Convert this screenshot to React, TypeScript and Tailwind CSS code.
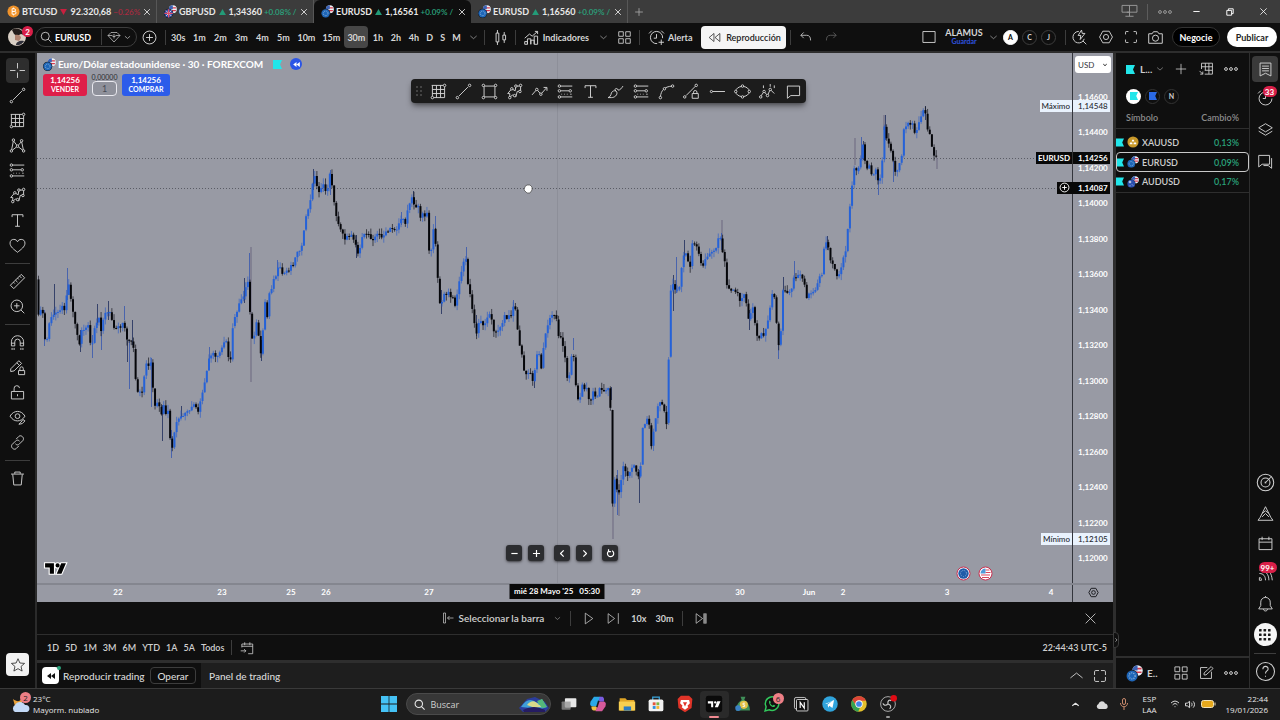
import type { ReactNode } from "react";
import clsx from "clsx";

const UI_FONT = "font-['Lato','Open_Sans',sans-serif]";
const OS_FONT = "font-['Open_Sans','Noto_Sans',sans-serif]";

/* ---------- icons (28px grid) ---------- */

const dot = (x: number, y: number, r = 1.8) => (
  <circle key={`${x}-${y}`} cx={x} cy={y} r={r} className="fill-[#0f0f0f]" />
);

const ICONS: Record<string, ReactNode> = {
  cross: <path d="M14 3v8M14 17v8M3 14h8M17 14h8" />,
  line: (
    <>
      <path d="M7.500 20.500 20.500 7.500" />
      {dot(5, 23)}
      {dot(23, 5)}
    </>
  ),
  grid: (
    <>
      <path d="M4 5h17M5 5v16M5 23h18M23 7v16M5 11h18M5 17h18M11 5v18M17 5v18" />
      {dot(23, 5)}
      {dot(5, 23)}
    </>
  ),
  pattern: (
    <>
      <path d="M5 22 8 7l6 8 6-7 3 14-9-7z" />
      {dot(5, 22)}
      {dot(8, 6)}
      {dot(14, 15)}
      {dot(20, 7)}
      {dot(23, 22)}
    </>
  ),
  forecast: (
    <>
      <path d="M6 6h18M7 13h12M6 22h18" />
      <path d="M8 18h1M12 18h1M16 18h1M21 18h2" />
      {dot(5, 6)}
      {dot(5, 13)}
      {dot(21, 13)}
      {dot(5, 22)}
    </>
  ),
  shapes: (
    <>
      <path d="M7 23V17H4l6-7 5 3 1-7h7v7l-5 1-2 8-5-3z" />
      {dot(7, 23)}
      {dot(10, 10)}
      {dot(16, 6)}
      {dot(23, 5)}
      {dot(22, 14)}
      {dot(14, 20)}
    </>
  ),
  text: <path d="M6 9V5.500h16V9M14 5.500v17M10.500 22.500h7" />,
  heart: (
    <path d="M14 24C9 20 3 16 3 10.500 3 7 5.500 5 8.500 5c2.500 0 4.500 1.200 5.500 3.500C15 6.200 17 5 19.500 5c3 0 5.500 2 5.500 5.500C25 16 19 20 14 24z" />
  ),
  ruler: <path d="M3.500 19.500 19.500 3.500l5 5-16 16zM8 15l2 2M11 12l3 3M14 9l2 2M17 6l3 3" />,
  zoomIn: <path d="M13 4.500a8.500 8.500 0 1 0 0 17 8.500 8.500 0 0 0 0-17zM19 19l5 5M13 9v8M9 13h8" />,
  magnet: (
    <path d="M5 19v-6a9 9 0 0 1 18 0v6h-5v-6a4 4 0 0 0-8 0v6zM5 15h5M18 15h5M6 22v3M9 22v3M19 22v3M22 22v3" />
  ),
  pencilLock: (
    <>
      <path d="M4 20v-4L16 4l4 4L9 19l-5 1M13 7l4 4" />
      <path d="M15.500 18.500h9v6h-9zM17.500 18v-2.500a2.500 2.500 0 0 1 5 0V18" />
    </>
  ),
  lock: <path d="M5 12.500h18v11H5zM9 12V8.500a4 4 0 0 1 8-1M14 16.500v3" />,
  eye: (
    <>
      <path d="M3 12c3-5 7-7 11-7s8 2 11 7c-3 5-7 7-11 7s-8-2-11-7z" />
      <circle cx="14" cy="12" r="3.500" />
      <path d="M16 24l5-1 4-4-3-2-3 4z" />
    </>
  ),
  link: (
    <path d="m12 9 4-4c3-3 9 2 6 6l-5 5c-2 2-4 2-6 0M16 19l-4 4c-3 3-9-2-6-6l5-5c2-2 4-2 6 0" />
  ),
  trash: <path d="M4.500 7.500h19M10 7V4.500h8V7M7 8l1.500 15.500h11L21 8" />,
  star: <path d="m14 3 3.300 7.500 8.200.700-6.200 5.400 1.900 8L14 20.400l-7.200 4.200 1.900-8-6.200-5.400 8.200-.700z" />,
  search: <path d="M12.500 4.500a8 8 0 1 0 0 16 8 8 0 0 0 0-16zM18.500 18.500 25 25" />,
  gem: <path d="M8 5h12l6 6-12 13L2 11zM2 11h9M17 11h9M14 8v9M11 13h6" />,
  plusCircle: (
    <>
      <circle cx="14" cy="14" r="9.500" />
      <path d="M14 9v10M9 14h10" />
    </>
  ),
  plus: <path d="M14 5v18M5 14h18" />,
  minus: <path d="M6 14h16" />,
  close: <path d="m6 6 16 16M22 6 6 22" />,
  down: <path d="m6 10 8 7 8-7" />,
  up: <path d="m4 18 10-8 10 8" />,
  left: <path d="m17 6-8 8 8 8" />,
  right: <path d="m11 6 8 8-8 8" />,
  candles: <path d="M7.500 7.500h4v13h-4zM9.500 3v4.500M9.500 20.500V25M17.500 10.500h4v7h-4zM19.500 6v4.500M19.500 17.500V22" />,
  indicators: (
    <path d="M4 24v-4h4v4zM8 24v-8h5v8M13 24v-6h5v6M18 24V12h5v12zM4 15l7-6 4 3 8-7M19 5h4v4" />
  ),
  layouts: (
    <path d="M4.500 4.500h7.500v7.500H4.500zM16 4.500h7.500v7.500H16zM4.500 16h7.500v7.500H4.500zM16 16h7.500v7.500H16z" />
  ),
  alarm: (
    <path d="M15 23a9 9 0 1 1 8-8M14 9v6h-4M3 8l4-4M21 4l4 4M21 17v8M17 21h8" />
  ),
  clock: <path d="M14 6a9.500 9.500 0 1 0 9.500 9.500M14 9v6.500h-4M3 8l4-4" />,
  rewind: <path d="M13 6.500v15L4 14zM24 6.500v15L15 14z" />,
  undo: <path d="m10 6-5 5 5 5M5 11h10c5 0 7 3 7 9" />,
  redo: <path d="m18 6 5 5-5 5M23 11H13c-5 0-7 3-7 9" />,
  square: <path d="M4.500 5.500h19v17h-19z" />,
  hexagon: (
    <>
      <path d="M9 5h10l5 9-5 9H9l-5-9z" />
      <circle cx="14" cy="14" r="4" />
    </>
  ),
  expand: <path d="M10 5.500H6.500a1 1 0 0 0-1 1V10M18 5.500h3.500a1 1 0 0 1 1 1V10M10 22.500H6.500a1 1 0 0 1-1-1V18M18 22.500h3.500a1 1 0 0 0 1-1V18" />,
  frame: <path d="M12.500 5.500h-5a2 2 0 0 0-2 2v5M15.500 5.500h5a2 2 0 0 1 2 2v5M12.500 22.500h-5a2 2 0 0 1-2-2v-5M15.500 22.500h5a2 2 0 0 0 2-2v-5" />,
  camera: (
    <>
      <path d="M4 8.500h5l2-3h6l2 3h5v14H4z" />
      <circle cx="14" cy="15" r="4.500" />
    </>
  ),
  quick: <path d="M13 5a8.500 8.500 0 1 0 8 11M19 19l5 5M17 3l-5 8h4l-1 6 7-9h-4z" />,
  zigzag: (
    <>
      <path d="m3 19 7-8 6 7 8-9M20 8h5v5" />
      {dot(10, 11)}
      {dot(16, 18)}
    </>
  ),
  rect: (
    <>
      <path d="M6 6h16v16H6z" />
      {dot(5, 5)}
      {dot(23, 5)}
      {dot(5, 23)}
      {dot(23, 23)}
    </>
  ),
  brush: <path d="M3 23c3-1 4-3 5-7 2-4 7-4 8-1 1 4-3 8-8 8zM15 14l-2-3c2-2 4-2 5 1 3 0 5-3 7-6" />,
  curve: (
    <>
      <path d="M5 22c1-10 6-15 17-16" />
      {dot(5, 23)}
      {dot(11, 10)}
      {dot(23, 6)}
    </>
  ),
  lineLock: (
    <>
      <path d="M6 20 20 6M15 17h9v7h-9zM17 17v-2a2.500 2.500 0 0 1 5 0v2" />
      {dot(4, 22)}
      {dot(21, 5)}
    </>
  ),
  hline: (
    <>
      <path d="M4 14h21" />
      {dot(5, 14, 1.6)}
    </>
  ),
  ellipse: (
    <>
      <ellipse cx="14" cy="14" rx="10" ry="7.500" />
      {dot(4, 14)}
      {dot(24, 14)}
      {dot(14, 6)}
      {dot(14, 22)}
    </>
  ),
  elliott: (
    <>
      <path d="m4 21 5-7 5 6 4-9 6 6M8 5v4M18 3v4M24 5v4" />
      {dot(4, 22)}
      {dot(9, 14)}
      {dot(14, 20)}
      {dot(18, 11)}
    </>
  ),
  comment: <path d="M5 6h18v14H10l-5 4z" />,
  list: <path d="M6 4.500h16v19l-8-4-8 4zM9 9h10M9 12.500h10M9 16h10" />,
  layers: <path d="m14 4 10 6-10 6-10-6zM4 15l10 6 10-6" />,
  chat: <path d="M4 5h16v13H9l-5 4zM23 9v15l-5-4h-7" />,
  target: (
    <>
      <circle cx="14" cy="14" r="11" />
      <circle cx="14" cy="14" r="6" />
      <path d="m13 15 8-8M13 13l2 2" />
    </>
  ),
  pyramid: <path d="M3 24h22M6 20l3-6 5-10 5 10 3 6M9 14l5-4 5 4M6 20l-3 4M22 20l3 4M9 19l5-5 5 5" />,
  calendar: <path d="M4.500 7h19v16h-19zM4.500 12h19M9 4v5M19 4v5" />,
  feed: <path d="M5 20v4h3a3 3 0 0 0-3-4zM5 14c6 0 9 4 9 10M5 9c9 0 14 6 14 15M10 5c8 1 13 8 14 19" />,
  bell: <path d="M4 22h20l-3-5v-5a7 7 0 0 0-14 0v5zM11 22c0 4 6 4 6 0M14 3v2" />,
  help: (
    <>
      <circle cx="14" cy="14" r="12" />
      <path d="M10.500 11c0-5 7-5 7-.5 0 3-3.500 2.500-3.500 6M14 19.500v1.500" />
    </>
  ),
  table: <path d="M7 5h17v17H12M7 5v9M7 10.500h17M12 16h12M13 5v11M18.500 5v17M4 17l5 5M5 22h4v-4" />,
  edit: <path d="M16 5.500H5.500v17h17V12M11 17v-3L22 4l3 3-11 10z" />,
  goDate: <path d="M5 13V7h19v17h-8M5 11h19M10 4v5M19 4v5M3 19h9M9 16l3 3-3 3" />,
  selectBar: <path d="M5 4h4v20H5zM13 14h12M17 10l-4 4 4 4" />,
  play: <path d="M8 4v20l14-10z" />,
  step: <path d="M4 5v18l12-9zM23 4v20" />,
  toEnd: (
    <>
      <path d="M4 5v18l12-9z" />
      <path d="M18 5h5v18h-5z" fill="#8a8a8a" stroke="#8a8a8a" />
    </>
  ),
  reset: <path d="M9 8a8 8 0 1 0 9-1M9 3v6h6" />,
  monitor: <path d="M3 5h22v10H3zM14 5v16M8 21h12M14 15h-4" />,
};

function Icon({
  name,
  className = "size-[19px]",
  stroke = 1.4,
}: {
  name: string;
  className?: string;
  stroke?: number;
}) {
  return (
    <svg
      viewBox="0 0 28 28"
      fill="none"
      stroke="currentColor"
      strokeWidth={stroke}
      strokeLinejoin="round"
      className={clsx("shrink-0", className)}
      aria-hidden="true"
    >
      {ICONS[name]}
    </svg>
  );
}

function Dots({ className }: { className?: string }) {
  return (
    <svg viewBox="0 0 14 4" className={clsx("h-1 w-[14px] shrink-0", className)} fill="none" stroke="currentColor">
      <circle cx="2" cy="2" r="1.400" />
      <circle cx="7" cy="2" r="1.400" />
      <circle cx="12" cy="2" r="1.400" />
    </svg>
  );
}

function IconButton({
  name,
  label,
  className,
  size,
  stroke,
}: {
  name: string;
  label: string;
  className?: string;
  size?: string;
  stroke?: number;
}) {
  return (
    <button aria-label={label} className={clsx("flex shrink-0 items-center justify-center", className)}>
      <Icon name={name} className={size} stroke={stroke} />
    </button>
  );
}

/* ---------- symbol logos ---------- */

function UsFlag({ x, y, r }: { x: number; y: number; r: number }) {
  return (
    <g>
      <circle cx={x} cy={y} r={r} fill="#eef0f5" />
      <path d={`M${x - r + 1} ${y - 1.5}h${2 * r - 2}M${x - r + 1} ${y + 1.5}h${2 * r - 2}`} stroke="#d63a4e" strokeWidth="1.300" />
      <path d={`M${x} ${y}h${-r}a${r} ${r} 0 0 1 ${r} ${-r}z`} fill="#3b62b5" />
    </g>
  );
}

function PairLogo({ base, className = "size-[13px]" }: { base: string; className?: string }) {
  if (base === "BTC" || base === "XAU") {
    return (
      <svg viewBox="0 0 14 14" className={clsx("shrink-0", className)}>
        <circle cx="7" cy="7" r="6.500" fill={base === "BTC" ? "#f0932b" : "#c9992a"} />
        {base === "BTC" ? (
          <path d="M5.500 4h2.200a1.400 1.400 0 0 1 0 2.900H5.500zM5.500 6.900h2.700a1.500 1.500 0 0 1 0 3H5.500zM7 2.800V4M7 10v1.200" stroke="#fff" fill="none" />
        ) : (
          <path d="M5.500 6.500 6 4.500h2l.5 2zM3 9.500l.5-2h2.500l.5 2zM7.500 9.500l.5-2h2.500l.5 2z" fill="#fff" />
        )}
      </svg>
    );
  }
  return (
    <svg viewBox="0 0 14 14" className={clsx("shrink-0", className)}>
      <UsFlag x={9.500} y={4.500} r={4.300} />
      <circle cx="5" cy="9" r="5" className="fill-[#15171c]" />
      <circle cx="5" cy="9" r="4.500" fill={base === "EUR" ? "#1e66b8" : "#2a4fae"} />
      {base === "EUR" && <circle cx="5" cy="9" r="2.500" fill="none" stroke="#9fc0e0" strokeDasharray=".8 1" />}
      {base === "GBP" && (
        <>
          <path d="M2 6l6 6M8 6l-6 6" stroke="#f1d3da" />
          <path d="M5 4.500v9M.5 9h9" stroke="#e0526c" strokeWidth="1.500" />
        </>
      )}
      {base === "AUD" && <path d="M2 7h3M3.500 5.500v3M6 10l1 1M3 11.500h1" stroke="#f1f1f6" />}
    </svg>
  );
}

function FlagMark({ color, className = "size-[9px]" }: { color: string; className?: string }) {
  return (
    <svg viewBox="0 0 9 9" className={clsx("shrink-0", className)}>
      <path d="M0 0h9L7 4.500 9 9H0z" fill={color} />
    </svg>
  );
}

function TvLogo({ className }: { className?: string }) {
  return (
    <svg viewBox="0 0 24 14" className={clsx("shrink-0", className)}>
      <path
        d="M2 2h8.500v10H6.500V6H2zM12 4a2 2 0 1 1 4 0 2 2 0 0 1-4 0zM17.500 2H22l-4.300 10h-4.500z"
        fill="#000"
        stroke="#fff"
        strokeWidth="2.200"
        paintOrder="stroke"
      />
    </svg>
  );
}

/* ---------- window tabs ---------- */

const TABS = [
  { base: "BTC", symbol: "BTCUSD", up: false, price: "92.320,68", change: "−0.26%" },
  { base: "GBP", symbol: "GBPUSD", up: true, price: "1,34360", change: "+0.08% /" },
  { base: "EUR", symbol: "EURUSD", up: true, price: "1,16561", change: "+0.09% /", active: true },
  { base: "EUR", symbol: "EURUSD", up: true, price: "1,16560", change: "+0.09% /" },
];

function TabStrip() {
  return (
    <header className="flex h-[23px] shrink-0 items-stretch bg-[#3c3c3c] text-[9px] text-[#e8e8e8]">
      {TABS.map((tab, i) => (
        <div
          key={i}
          className={clsx(
            "flex w-[157px] items-center pr-1 pl-[7px]",
            tab.active ? "rounded-t-md bg-[#0f0f0f]" : "border-r border-[#575757]",
          )}
        >
          <PairLogo base={tab.base} />
          <a href="#" className="ml-[2px] font-bold">{tab.symbol}</a>
          <svg viewBox="0 0 8 7" className={clsx("ml-[3px] h-[6px] w-[7px] shrink-0", !tab.up && "rotate-180")}>
            <path d="M4 0l4 7H0z" fill={tab.up ? "#239b78" : "#c8203f"} />
          </svg>
          <span className="ml-[3px] font-bold">{tab.price}</span>
          <span
            className={clsx(
              "ml-[2px] flex-1 text-[8px] font-semibold whitespace-nowrap",
              tab.up ? "text-[#2aa37c]" : "text-[#a82a40]",
            )}
          >
            {tab.change}
          </span>
          <IconButton name="close" label="Cerrar" size="size-[10px]" stroke={2.4} className="w-[10px]" />
        </div>
      ))}
      <IconButton name="plus" label="Nueva pestaña" size="size-[12px]" stroke={2} className="w-[22px] text-[#a5a5a5]" />
      <div className="ml-auto flex items-center text-[#9a9a9a]">
        <Icon name="monitor" />
        <span className="ml-2 h-4 w-px bg-[#5c5c5c]" />
        <Dots className="ml-[10px]" />
        <IconButton name="minus" label="Minimizar" size="size-[11px]" stroke={2.4} className="ml-2 w-[33px] text-white" />
        <button aria-label="Restaurar" className="flex w-[33px] justify-center text-white">
          <svg viewBox="0 0 10 10" className="size-2" fill="none" stroke="currentColor" strokeWidth="1.200">
            <path d="M1 3h6v6H1zM3 3V1h6v6H7" />
          </svg>
        </button>
        <IconButton name="close" label="Cerrar ventana" size="size-[11px]" stroke={2} className="w-[34px] text-white" />
      </div>
    </header>
  );
}

/* ---------- top toolbar ---------- */

const INTERVALS = ["30s", "1m", "2m", "3m", "4m", "5m", "10m", "15m", "30m", "1h", "2h", "4h", "D", "S", "M"];

function Separator({ className }: { className?: string }) {
  return <span className={clsx("h-[15px] w-px shrink-0 bg-[#3d3d3d]", className)} />;
}

function Toolbar() {
  return (
    <div className="flex h-[30px] shrink-0 items-center border-b-2 border-[#2e2e2e] bg-[#0f0f0f] text-[9px] font-bold text-[#d6d6d6]">
      <div className="relative ml-2 size-[18px] shrink-0">
        <svg viewBox="0 0 18 18" className="size-[18px]">
          <circle cx="9" cy="9" r="9" fill="#d9cfc4" />
          <path d="M4 2c4-3 11-1 12 5l-3-1-4 2-3-2z" fill="#241d1b" />
          <path d="M7 7c3-1 6 0 6 3l-2 3-4-1z" fill="#b08370" />
          <path d="M8 17c0-3 4-5 8-4-1 2-4 5-8 4z" fill="#30303a" />
        </svg>
        <span className="absolute -top-[2px] left-[14px] flex size-[11px] items-center justify-center rounded-full bg-[#d81f48] text-[8px] leading-none text-white">
          2
        </span>
      </div>
      <div className="ml-[9px] flex h-5 shrink-0 items-center rounded-full border border-[#3d3d3d]">
        <button className="flex w-[65px] items-center gap-[2px] pl-[3px] text-white">
          <Icon name="search" className="size-[14px]" />
          EURUSD
        </button>
        <span className="h-4 w-px bg-[#3d3d3d]" />
        <button aria-label="Comparar" className="flex w-[34px] items-center justify-center gap-[2px]">
          <Icon name="gem" className="size-[14px]" />
          <Icon name="down" className="size-[9px]" stroke={2} />
        </button>
      </div>
      <IconButton name="plusCircle" label="Añadir" className="ml-[3px]" />
      <Separator className="ml-[6px]" />
      <nav className="ml-[2px] flex shrink-0 items-center gap-px">
        {INTERVALS.map((t) => (
          <button
            key={t}
            className={clsx(
              "flex h-[22px] items-center justify-center rounded px-[3px]",
              t.endsWith("m") && "min-w-5",
              t.endsWith("h") && "min-w-[17px]",
              t === "30m" && "bg-[#474747]",
            )}
          >
            {t}
          </button>
        ))}
      </nav>
      <IconButton name="down" label="Más intervalos" size="size-[11px]" className="ml-1" />
      <Separator className="ml-[5px]" />
      <IconButton name="candles" label="Velas" className="ml-[6px]" />
      <Separator className="ml-[5px]" />
      <button className="ml-[6px] flex shrink-0 items-center gap-[2px]">
        <Icon name="indicators" />
        Indicadores
      </button>
      <IconButton name="down" label="Favoritos" size="size-[11px]" className="ml-[9px]" />
      <IconButton name="layouts" label="Plantillas" size="size-[17px]" className="ml-[7px]" />
      <Separator className="ml-[6px]" />
      <button className="ml-[7px] flex shrink-0 items-center gap-[2px]">
        <Icon name="alarm" />
        Alerta
      </button>
      <button className="ml-[9px] flex h-[23px] w-[85px] shrink-0 items-center justify-center gap-1 rounded bg-[#f5f5f5] font-semibold text-[#222]">
        <Icon name="rewind" className="size-[15px]" />
        Reproducción
      </button>
      <Separator className="ml-1" />
      <IconButton name="undo" label="Deshacer" size="size-[16px]" className="ml-[7px]" />
      <IconButton name="redo" label="Rehacer" size="size-[16px]" className="ml-[9px] text-[#666]" />

      <div className="ml-auto flex shrink-0 items-center">
        <Icon name="square" className="size-[18px]" />
        <div className="ml-2 flex w-[36px] flex-col items-center leading-[9px]">
          <span>ALAMUS</span>
          <button className="text-[7px] text-[#2f54e0]">Guardar</button>
        </div>
        <IconButton name="down" label="Diseños" size="size-[11px]" className="ml-[6px]" />
        <div className="ml-1 flex gap-1 text-[7px]">
          {["A", "C", "J"].map((l) => (
            <button
              key={l}
              className={clsx(
                "flex size-[15px] items-center justify-center rounded-full border",
                l === "A" ? "border-white bg-white text-black" : "border-[#3d3d3d]",
              )}
            >
              {l}
            </button>
          ))}
        </div>
        <Separator className="ml-[9px]" />
        <IconButton name="quick" label="Búsqueda rápida" className="ml-1" />
        <IconButton name="hexagon" label="Configuración" size="size-[18px]" className="ml-[8px]" />
        <IconButton name="expand" label="Pantalla completa" size="size-[18px]" className="ml-[7px]" />
        <IconButton name="camera" label="Captura" className="ml-[6px]" />
        <button className="ml-[7px] h-5 w-12 rounded-full border border-[#333] bg-black text-[9px] text-white">Negocie</button>
        <button className="mr-[3px] ml-[7px] h-5 w-[50px] rounded-full bg-white text-[9px] text-[#222]">Publicar</button>
      </div>
    </div>
  );
}

/* ---------- drawing rail ---------- */

const RAIL = [
  ["cross", "line", "grid", "pattern", "forecast", "shapes", "text", "heart"],
  ["ruler", "zoomIn"],
  ["magnet", "pencilLock", "lock", "eye", "link"],
  ["trash"],
];

function DrawingRail() {
  return (
    <aside className="flex w-[37px] shrink-0 flex-col items-center border-r-2 border-[#2b2b2b] bg-[#0f0f0f] pt-[5px] text-[#d0d0d0]">
      {RAIL.map((group, g) => (
        <div key={g} className="flex flex-col items-center">
          {g > 0 && <span className="my-[5px] h-px w-[25px] bg-[#3d3d3d]" />}
          {group.map((name) => (
            <IconButton
              key={name}
              name={name}
              label={name}
              className={clsx("h-[25px] w-[23px] rounded", name === "cross" && "bg-[#2e2e2e]")}
            />
          ))}
        </div>
      ))}
      <IconButton
        name="star"
        label="Favoritos"
        className="mt-auto mb-3 size-[23px] rounded bg-[#f2f2f2] text-[#222]"
        size="size-[16px]"
      />
    </aside>
  );
}

/* ---------- chart ---------- */

const VIEW = { x: 37, y: 53, w: 1035, h: 530 };

// price path, as x / y pairs on the plot
const PATH = [
  36, 275, 38, 312, 43, 313, 44, 340, 48, 339, 49, 323, 54, 315, 58, 309, 65, 307, 68, 281, 71, 297, 73, 312, 76, 327,
  79, 347, 81, 330, 89, 327, 91, 353, 94, 333, 99, 318, 100, 333, 104, 315, 109, 312, 114, 325, 120, 327, 124, 320,
  127, 340, 130, 343, 133, 337, 135, 377, 138, 393, 143, 395, 145, 367, 151, 362, 153, 390, 156, 410, 158, 398,
  161, 420, 163, 402, 165, 417, 169, 412, 170, 435, 172, 453, 174, 437, 178, 418, 182, 418, 186, 413, 194, 407,
  199, 412, 202, 393, 206, 380, 209, 357, 213, 355, 217, 360, 223, 345, 226, 340, 229, 358, 232, 357, 233, 320,
  236, 315, 239, 302, 244, 293, 249, 282, 251, 343, 254, 335, 256, 322, 259, 340, 261, 355, 263, 327, 265, 302,
  267, 320, 269, 293, 274, 280, 279, 268, 283, 275, 290, 267, 295, 260, 298, 248, 303, 248, 305, 217, 310, 207,
  312, 182, 315, 177, 318, 192, 322, 185, 327, 193, 329, 173, 333, 187, 335, 210, 337, 222, 342, 230, 346, 240,
  352, 232, 356, 245, 357, 257, 361, 242, 367, 232, 372, 238, 378, 235, 385, 235, 390, 230, 397, 228, 401, 218,
  405, 225, 408, 205, 413, 195, 415, 212, 418, 205, 420, 215, 427, 213, 428, 240, 430, 257, 434, 228, 437, 263,
  439, 297, 441, 308, 443, 297, 448, 293, 455, 303, 458, 290, 462, 267, 466, 259, 467, 278, 472, 307, 476, 335,
  478, 322, 483, 323, 490, 315, 494, 330, 500, 330, 503, 318, 512, 315, 514, 302, 517, 320, 519, 348, 521, 342,
  523, 370, 525, 376, 529, 370, 534, 382, 536, 353, 539, 353, 541, 373, 543, 350, 546, 333, 550, 317, 556, 313,
  558, 335, 562, 342, 565, 358, 568, 383, 573, 345, 575, 377, 579, 408, 581, 388, 587, 385, 590, 405, 593, 393,
  596, 399, 600, 390, 608, 387, 610, 397, 611, 434, 612, 505, 613, 505, 615, 474, 618, 498, 621, 483, 623, 465, 627, 477,
  632, 468, 634, 463, 637, 475, 640, 481, 642, 432, 647, 420, 649, 423, 651, 446, 655, 423, 658, 407, 661, 401,
  664, 407, 666, 432, 668, 389, 670, 292, 674, 283, 677, 293, 680, 287, 682, 260, 687, 253, 690, 270, 692, 243,
  695, 243, 698, 252, 702, 265, 708, 255, 713, 252, 720, 237, 722, 252, 724, 245, 726, 282, 732, 290, 737, 292,
  740, 300, 745, 292, 749, 320, 753, 305, 757, 337, 765, 332, 769, 313, 772, 292, 775, 300, 777, 327, 778, 350,
  781, 330, 783, 290, 787, 295, 792, 287, 794, 277, 800, 275, 805, 283, 806, 297, 813, 293, 820, 278, 821, 287,
  823, 255, 827, 239, 829, 255, 835, 267, 837, 277, 842, 265, 846, 247, 849, 217, 853, 173, 856, 162, 857, 177,
  861, 160, 863, 145, 865, 163, 868, 168, 871, 165, 872, 178, 876, 167, 879, 187, 882, 168, 884, 126, 887, 142,
  891, 150, 895, 170, 899, 168, 902, 153, 903, 130, 908, 123, 912, 125, 915, 132, 918, 125, 922, 115, 925, 108,
  927, 125, 931, 140, 933, 153, 936, 154, 938, 158,
];

// long shadows: x, top, bottom
const SHADOWS = [
  [44, 310, 346], [54, 284, 315], [67, 268, 300], [80, 330, 352], [92, 335, 358], [97, 304, 325], [101, 320, 350],
  [108, 301, 320], [124, 306, 320], [127, 340, 362], [129, 340, 389], [132, 320, 345], [151, 358, 407], [162, 405, 441],
  [171, 430, 458], [181, 406, 418], [209, 347, 365], [244, 278, 303], [249, 253, 290], [261, 340, 361], [277, 260, 275],
  [313, 169, 190], [330, 170, 195], [356, 235, 258], [401, 212, 225], [413, 191, 205], [435, 216, 240], [441, 290, 314],
  [466, 247, 262], [476, 315, 336], [513, 300, 312], [534, 370, 388], [573, 338, 350], [611, 387, 400], [617, 470, 515],
  [639, 470, 503], [651, 430, 448], [673, 275, 311], [676, 257, 293], [684, 240, 260], [721, 233, 250], [749, 310, 330],
  [778, 340, 359], [783, 277, 300], [794, 261, 280], [827, 236, 250], [861, 137, 160], [863, 141, 160], [878, 170, 195],
  [885, 115, 140], [893, 160, 182], [925, 106, 120],
];

const GHOSTS = [[251, 247, 382], [613, 500, 539], [619, 480, 516], [722, 220, 240], [884, 115, 130], [937, 158, 169], [855, 138, 165]];

const noise = (n: number) => {
  const s = Math.sin(n * 12.9898) * 43758.5453;
  return s - Math.floor(s);
};

function priceAt(x: number) {
  for (let i = 2; i < PATH.length; i += 2) {
    if (x <= PATH[i]) {
      const t = (x - PATH[i - 2]) / (PATH[i] - PATH[i - 2]);
      return PATH[i - 1] + t * (PATH[i + 1] - PATH[i - 1]);
    }
  }
  return PATH[PATH.length - 1];
}

const BARS = Array.from({ length: 417 }, (_, i) => {
  const x = 38.5 + i * 2.158;
  const open = priceAt(x - 2.1) + (noise(i) - 0.5) * 6;
  const close = priceAt(x) + (noise(i + 1) - 0.5) * 6;
  const top = Math.min(open, close);
  const bottom = Math.max(open, close);
  return {
    x,
    top,
    bottom,
    high: top - noise(i + 500) * 6,
    low: bottom + noise(i + 900) * 6,
    up: close < open,
  };
});

const yOf = (price: number) => ((96.5 + (1.146 - price) * 17750 - VIEW.y) / VIEW.h) * 100;
const xOf = (px: number) => ((px - VIEW.x) / VIEW.w) * 100;

const format = (price: number) => price.toFixed(5).replace(".", ",");

const PRICES = Array.from({ length: 14 }, (_, i) => 1.146 - i * 0.002);

const DATES = [
  ["22", 118], ["23", 222], ["25", 291], ["26", 326], ["27", 429], ["29", 636],
  ["30", 740], ["Jun", 809], ["2", 843], ["3", 947], ["4", 1051],
] as const;

function Candles() {
  return (
    <svg
      viewBox={`${VIEW.x} ${VIEW.y} ${VIEW.w} ${VIEW.h}`}
      preserveAspectRatio="none"
      className="block size-full"
      role="img"
      aria-label="EURUSD 30m"
    >
      <path d="M557.500 53v530" stroke="#8d8f99" />
      <path d="M37 158.500h1035M37 188.500h1035" stroke="#5a5c65" strokeDasharray="1 2" />
      {GHOSTS.map(([x, a, b]) => (
        <path key={`${x}-${a}`} d={`M${x} ${a}V${b}`} stroke="#737186" strokeWidth="1.200" />
      ))}
      {SHADOWS.map(([x, a, b], i) => (
        <path key={x} d={`M${x + 0.5} ${a}V${b}`} stroke={i % 2 ? "#1d2c5c" : "#3557b0"} strokeWidth=".8" />
      ))}
      {BARS.map((b) => (
        <g key={b.x}>
          <path d={`M${b.x} ${b.high}V${b.low}`} stroke={b.up ? "#3562c4" : "#15171f"} strokeWidth=".7" />
          <path
            d={`M${b.x} ${b.top}V${Math.max(b.bottom, b.top + 1)}`}
            stroke={b.up ? "#2562d8" : "#05060a"}
            strokeWidth="2"
          />
        </g>
      ))}
    </svg>
  );
}

const DRAW_TOOLS = [
  "grid", "line", "rect", "shapes", "zigzag", "forecast", "text", "brush", "forecast",
  "curve", "lineLock", "hline", "ellipse", "elliott", "comment",
];

const ZOOM_TOOLS = [["minus", "Alejar"], ["plus", "Acercar"], ["left", "Atrás"], ["right", "Adelante"], ["reset", "Restablecer"]];

function ChartLegend() {
  return (
    <div className="absolute top-1 left-[6px]">
      <div className="flex items-center text-white">
        <PairLogo base="EUR" />
        <h1 className="mr-[2px] ml-[2px] text-[10px] leading-[14px] font-bold">Euro/Dólar estadounidense · 30 · FOREXCOM</h1>
        <FlagMark color="#22e6ea" className="ml-2 size-[9px]" />
        <span className="ml-2 flex size-3 items-center justify-center rounded-full bg-[#2b55e6]">
          <svg viewBox="0 0 8 6" className="h-[5px] w-[7px]" fill="#fff">
            <path d="M4 0v6L0 3zM8 0v6L4 3z" />
          </svg>
        </span>
      </div>
      <div className="mt-[3px] flex gap-[5px]">
        <button className="h-[22px] w-[44px] rounded-[3px] bg-[#df1f49] text-[8px] leading-[9px] font-bold text-white">
          1,14256
          <br />
          <span className="text-[7px]">VENDER</span>
        </button>
        <div className="flex w-[25px] flex-col items-center">
          <span className="-mt-px text-[7px] leading-[8px] text-[#2a2c33]">0,00000</span>
          <input
            aria-label="Cantidad"
            defaultValue="1"
            className="h-[15px] w-full rounded border border-[#e8e8ee] bg-[#8f919b] text-center text-[9px] text-[#4a4c55]"
          />
        </div>
        <button className="h-[22px] w-[48px] rounded-[3px] bg-[#2c5cea] text-[8px] leading-[9px] font-bold text-white">
          1,14256
          <br />
          <span className="text-[7px]">COMPRAR</span>
        </button>
      </div>
    </div>
  );
}

function PriceTag({ price, name, dark }: { price: number; name: string; dark?: boolean }) {
  return (
    <div
      style={{ top: `${yOf(price)}%` }}
      className={clsx(
        "absolute right-[3px] flex h-[12px] -translate-y-1/2 items-center text-[8px] leading-none",
        dark ? "bg-[#080808] font-bold text-white" : "bg-[#e9f2fd] font-medium text-[#25282f]",
      )}
    >
      <span className="px-[2px]">{name}</span>
      <span
        className={clsx(
          "flex h-full w-[38px] items-center border-l pl-[5px]",
          dark ? "border-[#333]" : "border-[#33353c]",
        )}
      >
        {format(price)}
      </span>
    </div>
  );
}

function Chart() {
  return (
    <section className="flex min-h-0 flex-1 flex-col bg-[#989aa4]">
      <div className="relative flex min-h-0 flex-1">
        <div className="relative min-w-0 flex-1">
          <div className="absolute inset-0">
            <Candles />
          </div>
          <ChartLegend />
          <div className="absolute top-[26px] left-[374px] flex h-[24px] w-[395px] items-center rounded bg-[#1c1c1c] text-[#d4d4d4] shadow-md shadow-black/40">
            <svg viewBox="0 0 6 10" className="ml-[5px] h-[10px] w-[6px] shrink-0" fill="#777">
              {[1, 5].map((x) => [1, 5, 9].map((y) => <circle key={`${x}${y}`} cx={x} cy={y} r=".8" />))}
            </svg>
            <div className="ml-1 flex flex-1">
              {DRAW_TOOLS.map((name, i) => (
                <IconButton key={i} name={name} label={name} className="flex-1" />
              ))}
            </div>
          </div>
          <svg viewBox="0 0 10 10" className="absolute top-[131px] left-[486px] size-[10px]">
            <path d="M2 2.500 4 1h3l2 2v3L7 9H4L1 6z" fill="#fff" stroke="#444" strokeWidth=".7" />
          </svg>
          <div className="absolute bottom-[22px] left-[469px] flex gap-[6px]">
            {ZOOM_TOOLS.map(([name, label], i) => (
              <IconButton
                key={name}
                name={name}
                label={label}
                size="size-[11px]"
                stroke={3}
                className={clsx(
                  "size-4 rounded-[3px] bg-[#2c2d30] text-white shadow shadow-black/50",
                  (i === 2 || i === 4) && "ml-1",
                )}
              />
            ))}
          </div>
          <TvLogo className="absolute bottom-[7px] left-[6px] h-[15px] w-[25px]" />
          <div className="absolute right-[79px] bottom-[2px] flex gap-[7px]">
            <svg viewBox="0 0 15 15" className="size-[15px]">
              <circle cx="7.500" cy="7.500" r="6.500" fill="#fff" stroke="#c83050" />
              <circle cx="7.500" cy="7.500" r="5.200" fill="#1f5ba8" />
              <circle cx="7.500" cy="7.500" r="3" fill="none" stroke="#8fb4dc" strokeDasharray=".9 1.200" />
            </svg>
            <svg viewBox="0 0 15 15" className="size-[15px]">
              <circle cx="7.500" cy="7.500" r="6.500" fill="#fff" stroke="#c83050" />
              <path d="M3 9h9M4 11.500h7M7.500 6.500h5M7.500 4h4" stroke="#d8475c" strokeWidth="1.200" />
              <path d="M2.500 7.500a5 5 0 0 1 5-5v5z" fill="#4f9ad8" />
            </svg>
          </div>
        </div>
        <div className="relative w-[41px] shrink-0 border-l border-[#33353c]">
          {PRICES.map((p) => (
            <span
              key={p}
              style={{ top: `${yOf(p)}%` }}
              className="absolute left-[5px] -translate-y-1/2 text-[8px] leading-none font-bold text-white"
            >
              {format(p)}
            </span>
          ))}
          <select
            aria-label="Moneda"
            className="absolute top-[3px] left-[2px] h-[17px] w-[36px] appearance-none rounded-[3px] bg-white pl-[3px] text-[8px] text-[#33353c]"
          >
            <option>USD</option>
          </select>
          <Icon name="down" stroke={4} className="pointer-events-none absolute top-[9px] right-[5px] size-[6px] text-black" />
        </div>
        <PriceTag price={1.14548} name="Máximo" />
        <PriceTag price={1.14256} name="EURUSD" dark />
        <PriceTag price={1.12105} name="Mínimo" />
        <div
          style={{ top: `${yOf(1.14087)}%` }}
          className="absolute right-[3px] flex h-[12px] -translate-y-1/2 items-center bg-[#080808] text-[8px] font-bold text-white"
        >
          <Icon name="plusCircle" className="mx-px size-[13px]" stroke={2} />
          <span className="w-[38px] pl-[6px]">1,14087</span>
        </div>
      </div>
      <div className="flex h-[19px] shrink-0 border-t-2 border-[#84868f] text-[8px] leading-[15px] font-bold text-white">
        <div className="relative flex-1">
          {DATES.map(([label, x]) => (
            <span key={label} style={{ left: `${xOf(x)}%` }} className="absolute -translate-x-1/2">
              {label}
            </span>
          ))}
          <span
            style={{ left: `${xOf(557)}%` }}
            className="absolute -top-px flex h-[15px] w-[95px] -translate-x-1/2 items-center justify-center gap-[6px] bg-[#0a0a0a] whitespace-nowrap"
          >
            <span>mié 28 Mayo '25</span>
            <span>05:30</span>
          </span>
        </div>
        <div className="flex w-[41px] justify-center border-l border-[#33353c] text-[#17181c]">
          <Icon name="hexagon" stroke={2} className="mt-px size-[13px]" />
        </div>
      </div>
    </section>
  );
}

/* ---------- bars under the chart ---------- */

function ReplayBar() {
  return (
    <div className="relative flex h-[33px] shrink-0 items-center justify-center border-b border-[#2e2e2e] text-[10px] font-semibold text-[#d0d0d0]">
      <button className="flex items-center gap-1">
        <Icon name="selectBar" className="size-[14px]" />
        Seleccionar la barra
        <Icon name="down" className="ml-[5px] size-[9px]" />
      </button>
      <Separator className="ml-2" />
      <IconButton name="play" label="Reproducir" size="size-[15px]" className="ml-[10px]" />
      <IconButton name="step" label="Avanzar" size="size-[15px]" className="ml-[10px]" />
      <button className="ml-[10px] text-[9px] font-bold">10x</button>
      <button className="ml-[9px] text-[9px] font-bold">30m</button>
      <Separator className="ml-[9px]" />
      <IconButton name="toEnd" label="Ir al final" size="size-[15px]" className="ml-[11px]" />
      <IconButton name="close" label="Cerrar" size="size-[17px]" className="absolute right-[14px]" />
    </div>
  );
}

function RangeBar() {
  return (
    <div className="flex h-[25px] shrink-0 items-center pr-[6px] pl-[10px] text-[9px] font-semibold text-[#cfcfcf]">
      <div className="flex gap-[6px]">
        {["1D", "5D", "1M", "3M", "6M", "YTD", "1A", "5A", "Todos"].map((r) => (
          <button key={r}>{r}</button>
        ))}
      </div>
      <Separator className="mx-[7px]" />
      <IconButton name="goDate" label="Ir a la fecha" size="size-[16px]" />
      <span className="ml-auto">22:44:43 UTC-5</span>
    </div>
  );
}

function TradingPanel() {
  return (
    <div className="flex h-7 shrink-0 border-t-[3px] border-[#2e2e2e] bg-[#1e1e1e] text-[10px] font-medium text-[#dadada]">
      <div className="flex w-[164px] items-center bg-[#0f0f0f] pl-[5px]">
        <span className="relative flex size-[17px] shrink-0 items-center justify-center rounded bg-white">
          <svg viewBox="0 0 8 6" className="h-[6px] w-2" fill="#111">
            <path d="M4 0v6L0 3zM8 0v6L4 3z" />
          </svg>
          <span className="absolute -top-px -right-[2px] size-1 rounded-full bg-[#2aa37c]" />
        </span>
        <a href="#" className="ml-1 whitespace-nowrap">Reproducir trading</a>
        <button className="mr-[5px] ml-auto h-[17px] w-[46px] rounded border border-[#3d3d3d]">Operar</button>
      </div>
      <a href="#" className="my-auto ml-2">Panel de trading</a>
      <div className="ml-auto flex items-center gap-[6px] pr-1">
        <IconButton name="up" label="Abrir panel" size="size-[17px]" />
        <IconButton name="frame" label="Maximizar panel" size="size-[18px]" />
      </div>
    </div>
  );
}

/* ---------- watchlist and right rail ---------- */

const WATCHLIST = [
  { base: "XAU", symbol: "XAUUSD", change: "0,13%" },
  { base: "EUR", symbol: "EURUSD", change: "0,09%", active: true },
  { base: "AUD", symbol: "AUDUSD", change: "0,17%" },
];

function Watchlist() {
  return (
    <aside className="relative flex w-[137px] shrink-0 flex-col border-r border-l-[3px] border-[#2e2e2e] text-[10px] text-[#cfcfcf]">
      <div className="flex h-8 items-center pl-[10px]">
        <FlagMark color="#22e6ea" />
        <button className="ml-[5px] flex items-center gap-[3px] font-bold">
          L...
          <Icon name="down" className="size-[10px]" />
        </button>
        <IconButton name="plus" label="Añadir símbolo" size="size-[16px]" className="ml-2" />
        <IconButton name="table" label="Vista de tabla" size="size-[18px]" className="ml-2" />
        <Dots className="ml-[9px]" />
      </div>
      <div className="flex h-[22px] items-center gap-1 pl-[10px]">
        <button aria-label="Turquesa" className="flex size-[15px] items-center justify-center rounded-full bg-white">
          <FlagMark color="#22e6ea" className="size-2" />
        </button>
        <button aria-label="Azul" className="flex size-[15px] items-center justify-center rounded-full border border-[#333]">
          <FlagMark color="#2b6ae6" className="size-2" />
        </button>
        <button className="flex size-[15px] items-center justify-center rounded-full border border-[#333] text-[7px] font-bold">
          N
        </button>
      </div>
      <table className="w-full border-b border-[#2e2e2e]">
        <thead>
          <tr className="h-[21px] border-b border-[#2e2e2e] text-[9px] text-[#8c8c8c]">
            <th className="pl-[10px] text-left font-semibold">Símbolo</th>
            <th className="pr-[10px] text-right font-semibold whitespace-nowrap">Cambio%</th>
          </tr>
          <tr className="h-1" />
        </thead>
        <tbody className="text-[9px] font-semibold">
          {WATCHLIST.map((row) => (
            <tr key={row.symbol} className={clsx("h-5", row.active && "rounded outline outline-[#c9c9c9] -outline-offset-1")}>
              <td>
                <div className="flex items-center">
                  <FlagMark color="#22e6ea" className="h-[9px] w-2" />
                  <PairLogo base={row.base} className="ml-[3px] size-3" />
                  <span className="ml-[3px]">{row.symbol}</span>
                </div>
              </td>
              <td className="pr-[10px] text-right text-[#2aa37c]">{row.change}</td>
            </tr>
          ))}
        </tbody>
      </table>
      <div className="mt-auto flex h-8 items-center border-t-2 border-[#2e2e2e] pl-[10px]">
        <PairLogo base="EUR" className="size-[17px]" />
        <span className="ml-1 font-bold">E..</span>
        <IconButton name="layouts" label="Detalles" size="size-[18px]" className="ml-[14px]" />
        <IconButton name="edit" label="Notas" size="size-[18px]" className="ml-[7px]" />
        <Dots className="ml-[9px]" />
      </div>
      <button
        aria-label="Plegar panel"
        className="absolute bottom-[40px] -left-[3px] flex h-4 w-[6px] items-center justify-center rounded-r border border-[#3a3a3a] bg-[#0f0f0f]"
      >
        <Icon name="right" stroke={3} className="size-[6px]" />
      </button>
    </aside>
  );
}

function Badge({ children }: { children: ReactNode }) {
  return (
    <span className="absolute -top-[2px] -right-[2px] flex h-[11px] min-w-[14px] items-center justify-center rounded-full bg-[#d81f48] px-[2px] text-[8px] leading-none font-bold text-white">
      {children}
    </span>
  );
}

function RightRail() {
  return (
    <aside className="flex w-[30px] shrink-0 flex-col items-center text-[#d0d0d0]">
      <IconButton name="list" label="Lista" className="mt-[3px] size-[26px] rounded bg-[#3a3a3a]" />
      <div className="relative mt-[6px]">
        <IconButton name="clock" label="Alertas" />
        <Badge>33</Badge>
      </div>
      <IconButton name="layers" label="Datos" className="mt-[14px]" />
      <IconButton name="chat" label="Chats" className="mt-[12px]" />
      <div className="mt-auto flex flex-col items-center gap-[11px]">
        <IconButton name="target" label="Screener" size="size-[21px]" />
        <IconButton name="pyramid" label="Pine" />
        <IconButton name="calendar" label="Calendario" />
        <div className="relative">
          <IconButton name="feed" label="Novedades" />
          <Badge>99+</Badge>
        </div>
        <IconButton name="bell" label="Notificaciones" />
      </div>
      <button aria-label="Productos" className="mt-[10px] flex size-[23px] items-center justify-center rounded-full bg-[#f5f5f5]">
        <svg viewBox="0 0 12 12" className="size-3" fill="#1a1a1a">
          {[0, 4.5, 9].map((x) => [0, 4.5, 9].map((y) => <rect key={`${x}${y}`} x={x} y={y} width="2.600" height="2.600" rx=".5" />))}
        </svg>
      </button>
      <span className="my-[7px] h-px w-[22px] bg-[#3d3d3d]" />
      <IconButton name="help" label="Ayuda" size="size-[21px]" className="mb-[6px]" />
    </aside>
  );
}

/* ---------- taskbar ---------- */

const APPS: { name: string; art: ReactNode }[] = [
  { name: "Vista de tareas", art: <><rect x="1" y="7" width="11" height="10" rx="1" fill="#777" /><rect x="5" y="3" width="14" height="11" rx="1" fill="#e8e8e8" /><path d="M5 7h7v7H5z" fill="#a8a8a8" /></> },
  {
    name: "Copilot",
    art: (
      <>
        <path d="M5 1h8L9 13H4c-4 0-4-3-3-6z" fill="#2aa8e8" />
        <path d="M2 13h7l-1 5H6c-4 0-4-3-4-5z" fill="#f0c040" />
        <path d="M15 19H7l4-12h5c4 0 4 3 3 6z" fill="#d65a9a" />
        <path d="M12 1h3c2 0 3 3 2 6h-6z" fill="#7a5ce0" />
        <path d="M11 6 8.500 14" stroke="#1c1c1c" strokeWidth="2" />
      </>
    ),
  },
  { name: "Explorador", art: <><path d="M1 3h7l2 2h9v13H1z" fill="#e0a526" /><path d="M0 7h20v11H0z" fill="#f8cf50" /><path d="M6 13h9v5H6z" fill="#2b7cc4" /></> },
  {
    name: "Tienda",
    art: (
      <>
        <path d="M6 5V1.500h8V5" fill="none" stroke="#38a5de" strokeWidth="1.500" />
        <rect x="1" y="4.500" width="18" height="14.500" rx="2" fill="#f2f2f2" />
        <path d="M6 8h3.500v3.500H6z" fill="#e2553c" />
        <path d="M10.500 8H14v3.500h-3.500z" fill="#7cb342" />
        <path d="M6 12.500h3.500V16H6z" fill="#2f8fdc" />
        <path d="M10.500 12.500H14V16h-3.500z" fill="#f2b632" />
      </>
    ),
  },
  { name: "Brave", art: <><path d="M5 0h10l4 4-1 11-8 5-8-5L1 4z" fill="#e03428" /><path d="M5 5h10l1 4-3 3 1 2-4 3-4-3 1-2-3-3z" fill="#fff" /><path d="M7.500 8h5L10 13z" fill="#e03428" /></> },
  { name: "TradingView", art: <><rect width="20" height="20" rx="3" fill="#0a0a0a" /><path d="M2.500 6.500h6.500v7.500H6.500V9.500h-4zM10 8a1.500 1.500 0 1 1 3 0 1.500 1.500 0 0 1-3 0zM14 6.500h4L14.800 14H11z" fill="#fff" /></> },
  { name: "Finanzas", art: <><path d="M7 1h6l-1.500 4c5 3 7 8 7 13h-17c0-5 2-10 7-13z" fill="#3f8f58" /><circle cx="11" cy="11" r="5" fill="#e3c248" /><circle cx="4" cy="15" r="3.500" fill="#3b82c4" /><path d="M12.500 9h-2.500v2h2v2H9.500" stroke="#fff" fill="none" /></> },
  { name: "WhatsApp", art: <><path d="M1.500 18.500l1.300-5A8.300 8.300 0 1 1 6.500 17z" fill="#111" stroke="#32c75c" strokeWidth="1.800" /><path d="M6.500 6.500c1-1 1.500 0 2 1.500l-.7 1c.8 1.500 1.700 2.300 3.200 3l1-1c2 .7 2.500 1 1.500 2.200-3 2-8-3-7-6.700z" fill="#32c75c" /></> },
  { name: "Notion", art: <><rect x="2" y="2" width="14" height="14" rx="2" fill="none" stroke="#ddd" /><rect x="4.500" y="4.500" width="14" height="14" rx="1" fill="#111" stroke="#eee" /><path d="M9 15V8l5 7V8" fill="none" stroke="#fff" strokeWidth="1.400" /></> },
  { name: "Telegram", art: <><circle cx="10" cy="10" r="9.500" fill="#30a4dc" /><path d="M4 10l11-5-2 10-4-3-1 2.500-1-3.500 6-5-7 4z" fill="#fff" /></> },
  {
    name: "Chrome",
    art: (
      <>
        <circle cx="10" cy="10" r="9.500" fill="#e4c02c" />
        <path d="M1.800 5.200A9.500 9.500 0 0 1 18.500 6H10a4 4 0 0 0-3.700 5.500z" fill="#dc4538" />
        <path d="M1.800 5.200 6.500 12a4 4 0 0 0 5 1.700L9 19.400A9.500 9.500 0 0 1 1.800 5.200z" fill="#35a252" />
        <circle cx="10" cy="10" r="4.500" fill="#fff" />
        <circle cx="10" cy="10" r="3.500" fill="#4285e8" />
      </>
    ),
  },
  { name: "OBS", art: <><circle cx="10" cy="10" r="9" fill="#1a1a1a" stroke="#c8c8c8" /><path d="M10 10c-1-4 2-6 4-4M10 10c4 1 4 4 2 6M10 10c-3 3-6 1-6-1" fill="none" stroke="#c8c8c8" strokeWidth="1.400" /><circle cx="17" cy="3" r="4" fill="#e00b14" /></> },
];

function Taskbar() {
  return (
    <footer
      className={clsx(
        OS_FONT,
        "grid h-8 shrink-0 grid-cols-[1fr_auto_1fr] items-center border-t border-[#3a3a3a] bg-[#1c1c1c] pb-px text-[8px] leading-[11px] text-[#e6e6e6]",
      )}
    >
      <div className="flex items-center pl-[11px]">
        <div className="relative">
          <svg viewBox="0 0 20 20" className="size-5">
            <path d="M2 5c4 3 7 3 9-1v8H4z" fill="#e9a23b" />
            <path d="M4 18a4 4 0 0 1 0-7c2-4 8-4 10 0 5-1 6 6 2 7z" fill="#c3d9f6" />
          </svg>
          <span className="absolute -top-[2px] left-[9px] flex size-[11px] items-center justify-center rounded-full bg-[#ee7f86] text-[#222]">2</span>
        </div>
        <div className="ml-[2px]">
          <div>23°C</div>
          <div>Mayorm. nublado</div>
        </div>
      </div>
      <div className="flex items-center pl-[3px]">
        <button aria-label="Inicio">
          <svg viewBox="0 0 16 16" className="size-4" fill="#45c2f5">
            <path d="M0 0h7.600v7.600H0zM8.400 0H16v7.600H8.400zM0 8.400h7.600V16H0zM8.400 8.400H16V16H8.400z" />
          </svg>
        </button>
        <label className="ml-[9px] flex h-[22px] w-[145px] items-center rounded-full border border-[#4a4a4a] bg-[#373737] pl-[6px]">
          <Icon name="search" className="size-[13px]" stroke={2.400} />
          <input aria-label="Buscar" placeholder="Buscar" className="ml-[5px] w-20 bg-transparent text-[9px] placeholder:text-[#d0d0d0]" />
          <svg viewBox="0 0 30 16" className="mr-px ml-auto h-4 w-[30px]">
            <path d="M0 12 8 3l8-2 10 5 4 6-4 4H4z" fill="#2b3d9c" />
            <path d="M2 11c5-8 10-9 16-4l5-4 5 8-6 2z" fill="#3f9fd8" />
            <path d="M8 9c4-5 8-5 12 0l6 1-10 2z" fill="#d9d98a" />
            <path d="M18 5l5-2 5 8-5 1z" fill="#54b87a" />
            <path d="M4 14c8-4 14-4 22 0v2H5z" fill="#251c62" />
          </svg>
        </label>
        <div className="ml-1 flex">
          {APPS.map((app) => (
            <button
              key={app.name}
              aria-label={app.name}
              className={clsx(
                "relative flex h-[27px] w-[29px] items-center justify-center rounded",
                app.name === "TradingView" && "bg-[#2a2a2a]",
              )}
            >
              <svg viewBox="-1 -1 22 22" className="size-[18px]">{app.art}</svg>
              {app.name === "WhatsApp" && (
                <span className="absolute top-[2px] right-[3px] flex size-[11px] items-center justify-center rounded-full bg-[#ee7f86] text-[#222]">6</span>
              )}
              {app.name === "TradingView" && <span className="absolute bottom-0 h-[2px] w-[10px] rounded bg-[#f08a92]" />}
              {app.name === "OBS" && <span className="absolute bottom-0 h-[2px] w-1 rounded bg-[#9a9a9a]" />}
            </button>
          ))}
        </div>
      </div>
      <div className="flex items-center justify-end pr-3">
        <Icon name="up" className="size-[9px]" stroke={3.400} />
        <svg viewBox="0 0 12 9" className="ml-4 h-[9px] w-3" fill="#dadada">
          <path d="M3 9a2.600 2.600 0 0 1-.5-5C3.500.5 8 .2 9 3.500 12.500 3.600 12.500 9 9.500 9z" />
        </svg>
        <svg viewBox="0 0 8 12" className="ml-3 h-3 w-2" fill="none" stroke="#c98a6c">
          <rect x="2.500" y=".5" width="3" height="6" rx="1.500" />
          <path d="M.5 5c0 5 7 5 7 0M4 9v3" />
        </svg>
        <div className="ml-[14px] text-center">
          <div>ESP</div>
          <div>LAA</div>
        </div>
        <svg viewBox="0 0 10 9" className="ml-[13px] h-[8px] w-[10px]" fill="none" stroke="#eee">
          <path d="M.5 3.500c3-3 6-3 9 0M2.300 5.500c2-2 3.500-2 5.400 0M4.500 7.500h1" />
        </svg>
        <svg viewBox="0 0 11 10" className="ml-[5px] h-[9px] w-[10px]" fill="none" stroke="#eee">
          <path d="M.5 3.500h2l2.500-2v7l-2.500-2h-2zM7 3c1 1 1 3 0 4M9 1.500c2 2 2 5 0 7" />
        </svg>
        <svg viewBox="0 0 15 8" className="ml-[6px] h-2 w-[15px]">
          <rect x=".5" y=".5" width="12" height="7" rx="2" fill="#e7a91c" stroke="#f3e3b8" />
          <path d="M14 2.500v3" stroke="#f3e3b8" />
        </svg>
        <div className="ml-[10px] text-right">
          <div>22:44</div>
          <div>19/01/2026</div>
        </div>
      </div>
    </footer>
  );
}

export default function App() {
  return (
    <div className={clsx(UI_FONT, "flex h-screen flex-col overflow-hidden bg-[#0f0f0f] leading-none")}>
      <TabStrip />
      <Toolbar />
      <div className="flex min-h-0 flex-1">
        <DrawingRail />
        <main className="flex min-w-0 flex-1 flex-col">
          <Chart />
          <ReplayBar />
          <RangeBar />
          <TradingPanel />
        </main>
        <Watchlist />
        <RightRail />
      </div>
      <Taskbar />
    </div>
  );
}
